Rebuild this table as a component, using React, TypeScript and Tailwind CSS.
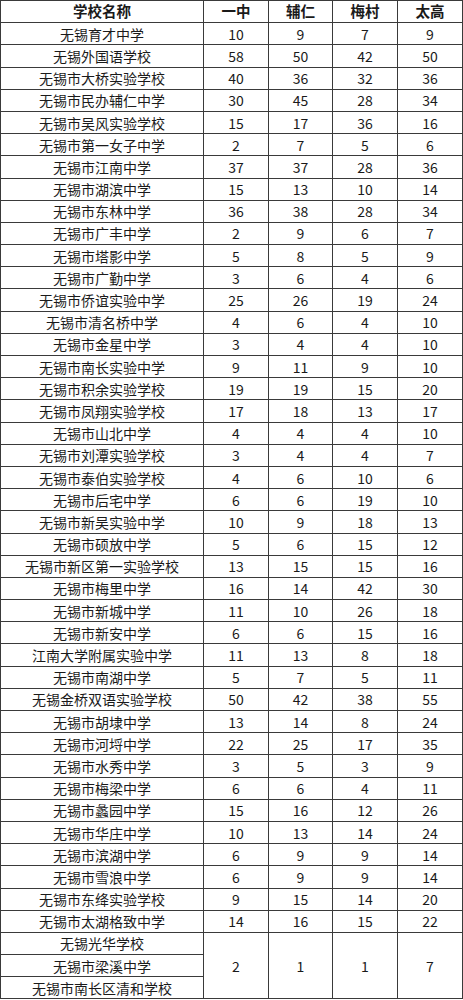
const rows: [string, number, number, number, number][] = [
  ["无锡育才中学", 10, 9, 7, 9],
  ["无锡外国语学校", 58, 50, 42, 50],
  ["无锡市大桥实验学校", 40, 36, 32, 36],
  ["无锡市民办辅仁中学", 30, 45, 28, 34],
  ["无锡市吴风实验学校", 15, 17, 36, 16],
  ["无锡市第一女子中学", 2, 7, 5, 6],
  ["无锡市江南中学", 37, 37, 28, 36],
  ["无锡市湖滨中学", 15, 13, 10, 14],
  ["无锡市东林中学", 36, 38, 28, 34],
  ["无锡市广丰中学", 2, 9, 6, 7],
  ["无锡市塔影中学", 5, 8, 5, 9],
  ["无锡市广勤中学", 3, 6, 4, 6],
  ["无锡市侨谊实验中学", 25, 26, 19, 24],
  ["无锡市清名桥中学", 4, 6, 4, 10],
  ["无锡市金星中学", 3, 4, 4, 10],
  ["无锡市南长实验中学", 9, 11, 9, 10],
  ["无锡市积余实验学校", 19, 19, 15, 20],
  ["无锡市凤翔实验学校", 17, 18, 13, 17],
  ["无锡市山北中学", 4, 4, 4, 10],
  ["无锡市刘潭实验学校", 3, 4, 4, 7],
  ["无锡市泰伯实验学校", 4, 6, 10, 6],
  ["无锡市后宅中学", 6, 6, 19, 10],
  ["无锡市新吴实验中学", 10, 9, 18, 13],
  ["无锡市硕放中学", 5, 6, 15, 12],
  ["无锡市新区第一实验学校", 13, 15, 15, 16],
  ["无锡市梅里中学", 16, 14, 42, 30],
  ["无锡市新城中学", 11, 10, 26, 18],
  ["无锡市新安中学", 6, 6, 15, 16],
  ["江南大学附属实验中学", 11, 13, 8, 18],
  ["无锡市南湖中学", 5, 7, 5, 11],
  ["无锡金桥双语实验学校", 50, 42, 38, 55],
  ["无锡市胡埭中学", 13, 14, 8, 24],
  ["无锡市河埒中学", 22, 25, 17, 35],
  ["无锡市水秀中学", 3, 5, 3, 9],
  ["无锡市梅梁中学", 6, 6, 4, 11],
  ["无锡市蠡园中学", 15, 16, 12, 26],
  ["无锡市华庄中学", 10, 13, 14, 24],
  ["无锡市滨湖中学", 6, 9, 9, 14],
  ["无锡市雪浪中学", 6, 9, 9, 14],
  ["无锡市东绛实验学校", 9, 15, 14, 20],
  ["无锡市太湖格致中学", 14, 16, 15, 22],
];

const merged = ["无锡光华学校", "无锡市梁溪中学", "无锡市南长区清和学校"];

const cell = "border border-[#3a3a3a] p-0 text-center align-middle";

export default function App() {
  return (
    <div className="bg-white text-[#1a1a1a] font-['Noto_Sans_CJK_SC','Noto_Sans',sans-serif] text-[14px] leading-none">
      <table className="w-[462px] table-fixed border-collapse">
        <colgroup>
          <col className="w-[203px]" />
          <col className="w-[65px]" />
          <col className="w-[64px]" />
          <col className="w-[65px]" />
          <col className="w-[65px]" />
        </colgroup>
        <thead>
          <tr className="h-[22.2px] font-bold text-[14.5px]">
            <th className={cell}>学校名称</th>
            <th className={cell}>一中</th>
            <th className={cell}>辅仁</th>
            <th className={cell}>梅村</th>
            <th className={cell}>太高</th>
          </tr>
        </thead>
        <tbody>
          {rows.map(([name, a, b, c, d]) => (
            <tr key={name} className="h-[22.2px]">
              <td className={cell}>{name}</td>
              <td className={cell}>{a}</td>
              <td className={cell}>{b}</td>
              <td className={cell}>{c}</td>
              <td className={cell}>{d}</td>
            </tr>
          ))}
          {merged.map((name, i) => (
            <tr key={name} className="h-[22.2px]">
              <td className={cell}>{name}</td>
              {i === 0 && (
                <>
                  <td rowSpan={3} className={cell}>2</td>
                  <td rowSpan={3} className={cell}>1</td>
                  <td rowSpan={3} className={cell}>1</td>
                  <td rowSpan={3} className={cell}>7</td>
                </>
              )}
            </tr>
          ))}
        </tbody>
      </table>
    </div>
  );
}
